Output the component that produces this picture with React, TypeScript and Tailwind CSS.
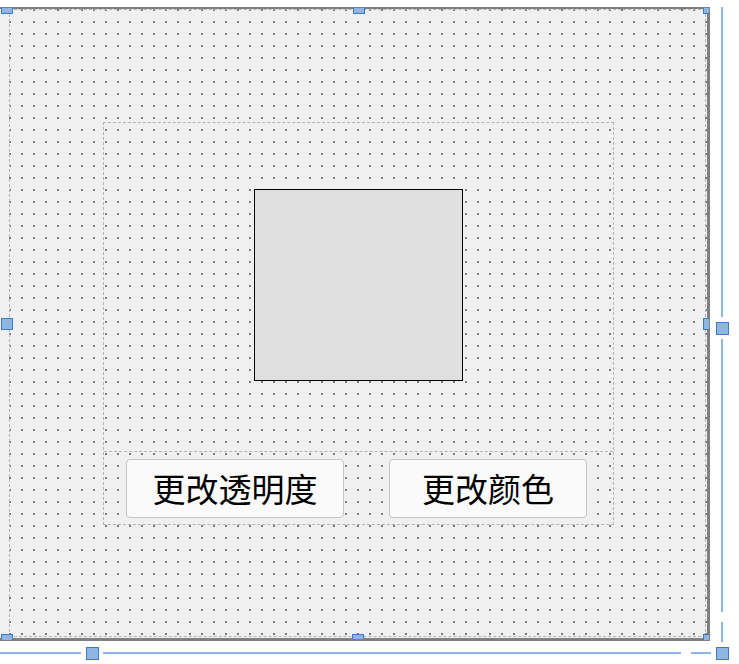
const handle = 'absolute bg-[#8fb6e3] border border-[#3d7cc2]';

export default function App() {
  return (
    <div
      className="relative w-[739px] h-[664px] overflow-hidden bg-white"
      style={{ fontFamily: '"Noto Sans CJK SC", "Noto Sans", sans-serif' }}
    >
      {/* Form */}
      <div className="mt-[7px] w-[710px] h-[634px] border-t-2 border-r-[3px] border-b-[3px] border-[#808080] bg-[#f0f0f0] bg-[radial-gradient(circle,#7a7a7a_0.8px,transparent_1.4px)] bg-[size:12px_12px] bg-[position:4px_7px]">
        {/* top-level layout */}
        <div className="ml-[9px] w-[697px] h-[628px] border border-dashed border-[#b4b4b4] pl-[93px] pt-[112px]">
          {/* vertical layout */}
          <div className="w-[511px] h-[403px] border border-dashed border-[#b4b4b4] flex flex-col">
            <div className="flex-1 flex justify-center pt-[66px]">
              <div className="w-[209px] h-[192px] border-[1.5px] border-black bg-[#e0e0e0]" />
            </div>
            {/* horizontal layout */}
            <div className="h-[73px] border-t border-dashed border-[#b4b4b4] flex items-center pl-[22px] gap-[45px]">
              <button className="w-[218px] h-[59px] rounded-[4px] border border-[#c4c4c4] bg-[#fafafa] text-[33px] leading-none text-black">
                更改透明度
              </button>
              <button className="w-[198px] h-[59px] rounded-[4px] border border-[#c4c4c4] bg-[#fafafa] text-[33px] leading-none text-black">
                更改颜色
              </button>
            </div>
          </div>
        </div>
      </div>

      {/* form selection handles (clipped at the form edges) */}
      <div className={`${handle} left-[1px] top-[8px] w-[12px] h-[6px] border-t-0`} />
      <div className={`${handle} left-[353px] top-[8px] w-[12px] h-[6px] border-t-0`} />
      <div className={`${handle} left-[703px] top-[8px] w-[6px] h-[6px] border-t-0 border-r-0`} />
      <div className={`${handle} left-[1px] top-[318px] w-[12px] h-[12px]`} />
      <div className={`${handle} left-[703px] top-[318px] w-[6px] h-[12px] border-r-0`} />
      <div className={`${handle} left-[1px] top-[634px] w-[12px] h-[6px] border-b-0`} />
      <div className={`${handle} left-[352px] top-[634px] w-[12px] h-[5px] border-b-0`} />
      <div className={`${handle} left-[703px] top-[634px] w-[6px] h-[6px] border-b-0 border-r-0`} />

      {/* resize guides */}
      <div className="absolute left-[721px] top-[7px] w-[2px] h-[310px] bg-[#8fb6e3]" />
      <div className="absolute left-[721px] top-[339px] w-[2px] h-[273px] bg-[#8fb6e3]" />
      <div className="absolute left-[721px] top-[622px] w-[2px] h-[20px] bg-[#8fb6e3]" />
      <div className="absolute left-0 top-[652px] w-[81px] h-[2px] bg-[#8fb6e3]" />
      <div className="absolute left-[103px] top-[652px] w-[578px] h-[2px] bg-[#8fb6e3]" />
      <div className="absolute left-[691px] top-[652px] w-[20px] h-[2px] bg-[#8fb6e3]" />
      <div className={`${handle} left-[716px] top-[322px] w-[13px] h-[13px]`} />
      <div className={`${handle} left-[86px] top-[647px] w-[13px] h-[13px]`} />
      <div className={`${handle} left-[716px] top-[647px] w-[13px] h-[13px]`} />
    </div>
  );
}
